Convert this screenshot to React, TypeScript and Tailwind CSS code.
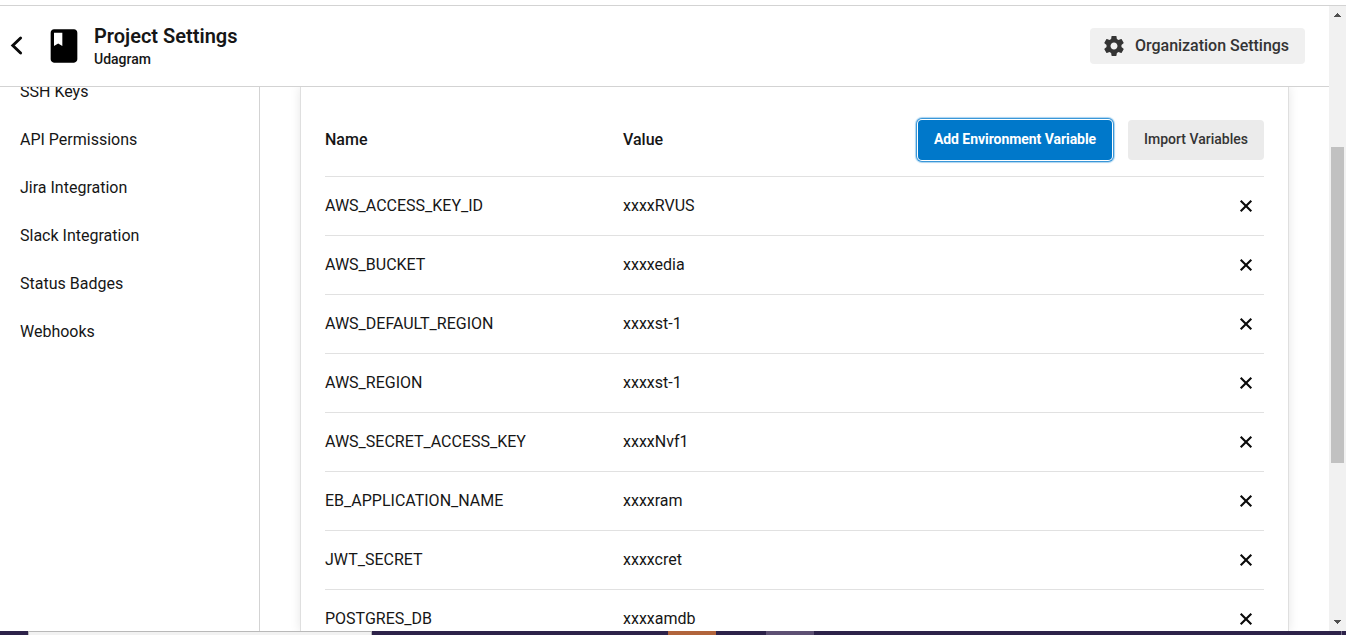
const navItems = [
  'SSH Keys',
  'API Permissions',
  'Jira Integration',
  'Slack Integration',
  'Status Badges',
  'Webhooks',
];

const variables = [
  { name: 'AWS_ACCESS_KEY_ID', value: 'xxxxRVUS' },
  { name: 'AWS_BUCKET', value: 'xxxxedia' },
  { name: 'AWS_DEFAULT_REGION', value: 'xxxxst-1' },
  { name: 'AWS_REGION', value: 'xxxxst-1' },
  { name: 'AWS_SECRET_ACCESS_KEY', value: 'xxxxNvf1' },
  { name: 'EB_APPLICATION_NAME', value: 'xxxxram' },
  { name: 'JWT_SECRET', value: 'xxxxcret' },
  { name: 'POSTGRES_DB', value: 'xxxxamdb' },
];

function BackIcon() {
  return (
    <svg className="mb-px h-[35px] w-[35px] shrink-0" viewBox="0 0 35 35" fill="none">
      <path
        d="M20.6 10L12.8 17.5L20.6 25"
        stroke="#0a0a0a"
        strokeWidth="2.9"
        strokeLinecap="round"
      />
    </svg>
  );
}

function BookIcon() {
  return (
    <svg className="mb-px h-10 w-10 shrink-0" viewBox="0 0 24 24" fill="#000">
      <path d="M18 2H6c-1.1 0-2 .9-2 2v16c0 1.1.9 2 2 2h12c1.1 0 2-.9 2-2V4c0-1.1-.9-2-2-2zM6 4h5v8l-2.5-1.5L6 12V4z" />
    </svg>
  );
}

function GearIcon() {
  return (
    <svg className="h-6 w-6 shrink-0" viewBox="0 0 24 24" fill="#343434">
      <path d="M19.43 12.98c.04-.32.07-.64.07-.98s-.03-.66-.07-.98l2.11-1.65c.19-.15.24-.42.12-.64l-2-3.46c-.12-.22-.39-.3-.61-.22l-2.49 1c-.52-.4-1.08-.73-1.69-.98l-.38-2.65C14.46 2.18 14.25 2 14 2h-4c-.25 0-.46.18-.49.42l-.38 2.65c-.61.25-1.17.59-1.69.98l-2.49-1c-.23-.09-.49 0-.61.22l-2 3.46c-.13.22-.07.49.12.64l2.11 1.65c-.04.32-.07.65-.07.98s.03.66.07.98l-2.11 1.65c-.19.15-.24.42-.12.64l2 3.46c.12.22.39.3.61.22l2.49-1c.52.4 1.08.73 1.69.98l.38 2.65c.03.24.24.42.49.42h4c.25 0 .46-.18.49-.42l.38-2.65c.61-.25 1.17-.59 1.69-.98l2.49 1c.23.09.49 0 .61-.22l2-3.46c.12-.22.07-.49-.12-.64l-2.11-1.65zM12 15.5c-1.93 0-3.5-1.57-3.5-3.5s1.57-3.5 3.5-3.5 3.5 1.57 3.5 3.5-1.57 3.5-3.5 3.5z" />
    </svg>
  );
}

function CloseIcon() {
  return (
    <svg className="h-5 w-5" viewBox="0 0 20 20" fill="none">
      <path d="M4.7 4.7l10.6 10.6M15.3 4.7L4.7 15.3" stroke="#0a0a0a" strokeWidth="2.1" />
    </svg>
  );
}

function Header() {
  return (
    <header className="flex h-[82px] shrink-0 items-center border-y border-[#d3d3d3] pr-6">
      <BackIcon />
      <div className="ml-[9px] flex items-center gap-[10px]">
        <BookIcon />
        <div className="pt-px">
          <h1 className="text-[20px] leading-6 font-semibold text-[#161616]">Project Settings</h1>
          <p className="text-[14px] leading-[22px] font-medium text-[#161616]">Udagram</p>
        </div>
      </div>
      <button className="ml-auto flex h-9 w-[215px] items-center gap-[9px] rounded-[4px] bg-[#f0f0f0] pl-3 text-[16px] font-medium tracking-[-0.02px] text-[#343434]">
        <GearIcon />
        Organization Settings
      </button>
    </header>
  );
}

function Sidebar() {
  return (
    <nav className="w-[260px] shrink-0 overflow-hidden border-r border-[#d3d3d3] pl-5">
      <ul className="-mt-[19px]">
        {navItems.map((item) => (
          <li key={item} className="flex h-12 items-center text-[16px] text-[#161616]">
            {item}
          </li>
        ))}
      </ul>
    </nav>
  );
}

function VariablesCard() {
  return (
    <section className="ml-10 w-[989px] shrink-0 border-x border-[#dfdfdf] px-6 pt-[33px] shadow-[0_0_10px_rgba(0,0,0,0.1)]">
      <div className="flex h-[57px] items-start border-b border-[#e1e1e1] text-[16px] font-medium text-[#161616]">
        <span className="w-[298px] leading-10">Name</span>
        <span className="leading-10">Value</span>
        <div className="ml-auto flex gap-4">
          <button className="h-10 w-[194px] rounded-[4px] bg-[#0078ca] pb-[2px] text-[14px] font-bold tracking-[-0.05px] whitespace-nowrap text-white shadow-[0_0_0_1px_#fff,0_0_0_2px_#3a97d8,0_0_1px_3px_#a9d3f0]">
            Add Environment Variable
          </button>
          <button className="h-10 w-[136px] rounded-[4px] bg-[#ebebeb] pb-[2px] text-[14px] font-medium whitespace-nowrap text-[#343434]">
            Import Variables
          </button>
        </div>
      </div>
      {variables.map(({ name, value }) => (
        <div
          key={name}
          className="flex h-[59px] items-center border-b border-[#e1e1e1] pr-2 text-[16px] text-[#161616]"
        >
          <span className="w-[298px]">{name}</span>
          <span>{value}</span>
          <button className="ml-auto" aria-label="Remove">
            <CloseIcon />
          </button>
        </div>
      ))}
    </section>
  );
}

function Scrollbar() {
  return (
    <div className="flex w-[17px] shrink-0 flex-col items-center justify-between bg-[#f1f1f1] pt-[7px] pb-[7px]">
      <svg className="h-1 w-[7px]" viewBox="0 0 7 4" fill="#505050" shapeRendering="crispEdges">
        <path d="M3 0h1v1h1v1h1v1h1v1H0V3h1V2h1V1h1z" />
      </svg>
      <div className="mt-[130px] mb-auto h-[316px] w-[13px] bg-[#c1c1c1]" />
      <svg className="h-1 w-[7px]" viewBox="0 0 7 4" fill="#505050" shapeRendering="crispEdges">
        <path d="M0 0h7v1H6v1H5v1H4v1H3V3H2V2H1V1H0z" />
      </svg>
    </div>
  );
}

function Taskbar() {
  return (
    <div className="flex h-1 shrink-0 bg-[#2d2249]">
      <div className="ml-7 h-full w-[344px] border-x border-t border-[#b9b9b9] bg-[#f2f2f2]" />
      <div className="ml-[296px] h-full w-12 bg-[#b1643b]" />
      <div className="ml-[50px] h-full w-12 bg-[#5d5073]" />
      <div className="mr-1 ml-auto h-full w-px bg-[#77708a]" />
    </div>
  );
}

export default function App() {
  return (
    <div className="flex h-[635px] w-[1346px] flex-col overflow-hidden bg-white font-['Roboto',sans-serif]">
      <div className="flex min-h-0 flex-1 pt-[5px]">
        <div className="flex min-w-0 flex-1 flex-col">
          <Header />
          <main className="flex min-h-0 flex-1 overflow-hidden">
            <Sidebar />
            <VariablesCard />
          </main>
        </div>
        <div className="flex border-t border-[#d3d3d3]">
          <Scrollbar />
        </div>
      </div>
      <Taskbar />
    </div>
  );
}
